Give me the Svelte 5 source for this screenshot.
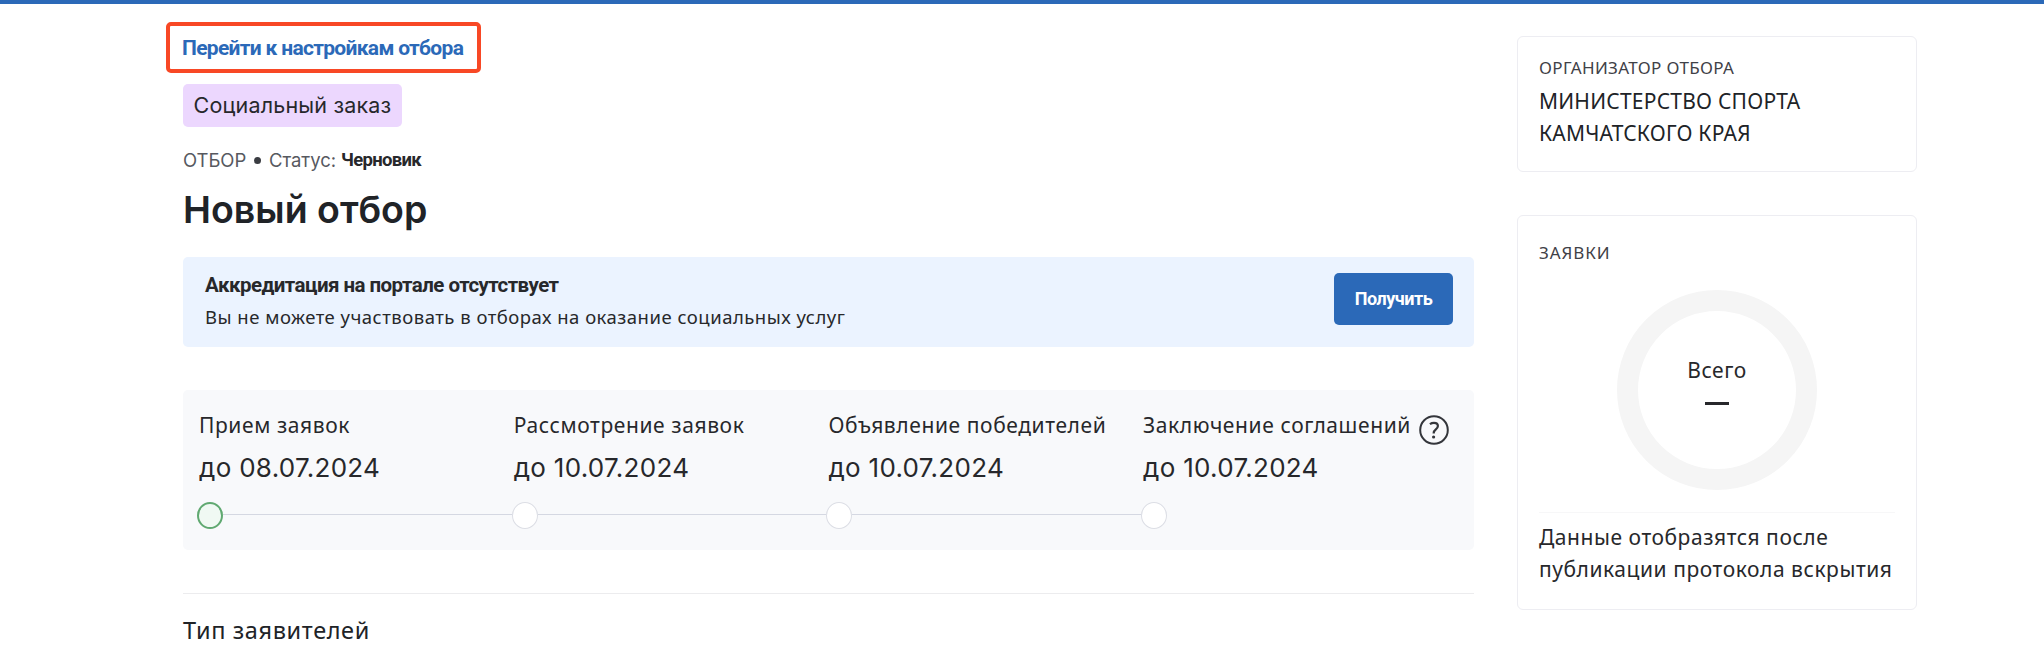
<script>
  const steps = [
    { name: 'Прием заявок', date: 'до 08.07.2024', active: true },
    { name: 'Рассмотрение заявок', date: 'до 10.07.2024' },
    { name: 'Объявление победителей', date: 'до 10.07.2024' },
    { name: 'Заключение соглашений', date: 'до 10.07.2024', help: true }
  ];
</script>

<div class="topbar"></div>
<div class="page">
  <main>
    <div class="link-frame"><a href="#settings">Перейти к настройкам отбора</a></div>
    <div class="badge">Социальный заказ</div>
    <p class="status">
      <span class="kind">ОТБОР</span><i class="dot"></i><span>Статус:</span><strong>Черновик</strong>
    </p>
    <h1>Новый отбор</h1>

    <section class="alert">
      <div>
        <h2>Аккредитация на портале отсутствует</h2>
        <p>Вы не можете участвовать в отборах на оказание социальных услуг</p>
      </div>
      <button>Получить</button>
    </section>

    <section class="steps">
      {#each steps as step, i}
        <div class="step">
          <div class="name">
            {step.name}
            {#if step.help}
              <svg class="help" viewBox="0 0 30 30" width="30" height="30" fill="none" stroke="#34363b">
                <circle cx="15" cy="15" r="13.8" stroke-width="2" />
                <path d="M10.9 9.2C12.2 8.3 13.5 7.9 15 7.9c2.4 0 3.9 1.2 3.9 3.2 0 3.2-4.2 3.4-4.2 6.8v.5" stroke-width="2.2" />
                <circle cx="14.6" cy="22" r="1.6" fill="#34363b" stroke="none" />
              </svg>
            {/if}
          </div>
          <div class="date">{step.date}</div>
          <div class="track">
            <span class="node" class:active={step.active}></span>
            {#if i < steps.length - 1}<span class="line"></span>{/if}
          </div>
        </div>
      {/each}
    </section>

    <hr />
    <h3>Тип заявителей</h3>
  </main>

  <aside>
    <section class="card organizer">
      <div class="label">ОРГАНИЗАТОР ОТБОРА</div>
      <div class="org">МИНИСТЕРСТВО СПОРТА КАМЧАТСКОГО КРАЯ</div>
    </section>
    <section class="card bids">
      <div class="label wide">ЗАЯВКИ</div>
      <div class="ring">
        <span>Всего</span>
        <i class="dash"></i>
      </div>
      <p class="note">Данные отобразятся после публикации протокола вскрытия</p>
    </section>
  </aside>
</div>

<style>
  :global(body) {
    background: #fff;
    overflow: hidden;
  }
  * {
    box-sizing: border-box;
  }
  h1, h2, h3, p {
    margin: 0;
  }
  .topbar {
    height: 4px;
    background: #2b69b8;
  }
  .page {
    display: grid;
    grid-template-columns: 1291px 400px;
    column-gap: 43px;
    padding-left: 183px;
    align-items: start;
    font-family: "Noto Sans", sans-serif;
    color: #27282b;
  }
  main {
    padding-top: 18px;
  }
  .link-frame {
    display: flex;
    align-items: center;
    width: 315px;
    height: 51px;
    margin-left: -17px;
    padding-left: 12px;
    border: 4px solid #f84825;
    border-radius: 5px;
  }
  a {
    font: 700 21px "Roboto", sans-serif;
    letter-spacing: -0.69px;
    color: #2b69b8;
    text-decoration: none;
    white-space: nowrap;
  }
  .badge {
    width: 219px;
    height: 43px;
    margin-top: 11px;
    border-radius: 5px;
    background: #ecd7fe;
    font: 400 21.5px/43px Inter, sans-serif;
    letter-spacing: 0.18px;
    text-align: center;
  }
  .status {
    display: flex;
    align-items: center;
    height: 26px;
    margin-top: 20px;
    font: 400 18.5px/26px Inter, sans-serif;
    letter-spacing: -0.05px;
    color: #57595f;
  }
  .kind {
    width: 71px;
  }
  .dot {
    width: 7px;
    height: 7px;
    margin-right: 8px;
    border-radius: 50%;
    background: #3a3c42;
  }
  strong {
    margin-left: 5px;
    font: 700 18.5px/26px "Roboto", sans-serif;
    letter-spacing: -0.7px;
    color: #27282b;
  }
  h1 {
    margin-top: 14px;
    font: 600 37.5px/46px Inter, sans-serif;
    letter-spacing: 0;
    color: #202327;
  }
  .alert {
    display: flex;
    justify-content: space-between;
    align-items: flex-start;
    height: 90px;
    margin-top: 24px;
    padding: 14px 21px 0;
    border-radius: 5px;
    background: #ebf3ff;
  }
  h2 {
    padding-left: 1px;
    font: 700 20.5px/28px "Roboto", sans-serif;
    letter-spacing: -0.54px;
  }
  .alert p {
    margin-top: 2px;
    padding-left: 1px;
    font-size: 18.5px;
    line-height: 32px;
    letter-spacing: 0.49px;
  }
  button {
    width: 119px;
    height: 52px;
    margin-top: 2px;
    padding: 0 0 2px;
    border: 0;
    border-radius: 5px;
    background: #2b69b8;
    color: #fff;
    font: 700 18px "Roboto", sans-serif;
    letter-spacing: -0.5px;
  }
  .steps {
    display: grid;
    grid-template-columns: repeat(4, 314.7px);
    height: 160px;
    margin-top: 43px;
    padding: 20px 0 0 14px;
    border-radius: 5px;
    background: #f8f9fb;
  }
  .name {
    display: flex;
    height: 30px;
    padding-left: 2px;
    font-size: 21px;
    line-height: 31px;
    letter-spacing: 0.6px;
    white-space: nowrap;
  }
  .help {
    margin: 5px 0 0 8px;
    flex: none;
  }
  .date {
    margin-top: 12px;
    padding-left: 2px;
    font: 400 26px/32px Inter, sans-serif;
    letter-spacing: 0.3px;
  }
  .track {
    display: flex;
    align-items: center;
    height: 27px;
    margin-top: 18px;
  }
  .node {
    width: 26px;
    height: 27px;
    border: 1px solid #dcdee5;
    border-radius: 50%;
    background: #fff;
  }
  .node.active {
    border: 2px solid #60a971;
    background: #f0f9f3;
  }
  .line {
    flex: 1;
    height: 1px;
    margin-bottom: 2px;
    background: #d5d8e2;
  }
  hr {
    height: 1px;
    margin: 43px 0 18px;
    border: 0;
    background: #ececee;
  }
  h3 {
    font-size: 23.5px;
    font-weight: 400;
    line-height: 36px;
    letter-spacing: 0.62px;
    color: #202327;
  }
  aside {
    padding-top: 32px;
  }
  .card {
    border: 1px solid #ededf2;
    border-radius: 6px;
    padding: 0 21px;
  }
  .organizer {
    height: 136px;
    padding-top: 19px;
  }
  .label {
    font-size: 17px;
    line-height: 24px;
    letter-spacing: 0.35px;
    color: #3f4147;
  }
  .wide {
    letter-spacing: 0.9px;
  }
  .org {
    width: 300px;
    margin-top: 5px;
    font-size: 21px;
    line-height: 32px;
    letter-spacing: 0.22px;
    color: #202327;
  }
  .bids {
    height: 395px;
    margin-top: 43px;
    padding-top: 25px;
  }
  .ring {
    display: flex;
    flex-direction: column;
    align-items: center;
    width: 200px;
    height: 200px;
    margin: 25px auto 22px;
    padding-top: 43px;
    border: 21px solid #f5f5f5;
    border-radius: 50%;
    font-size: 21px;
    line-height: 32px;
    letter-spacing: 0.55px;
  }
  .dash {
    width: 24px;
    height: 3px;
    margin-top: 16px;
    background: #27282b;
  }
  .note {
    border-top: 1px solid #f7f7f8;
    padding-top: 8px;
    font-size: 21px;
    line-height: 32px;
    letter-spacing: 0.55px;
  }
</style>
